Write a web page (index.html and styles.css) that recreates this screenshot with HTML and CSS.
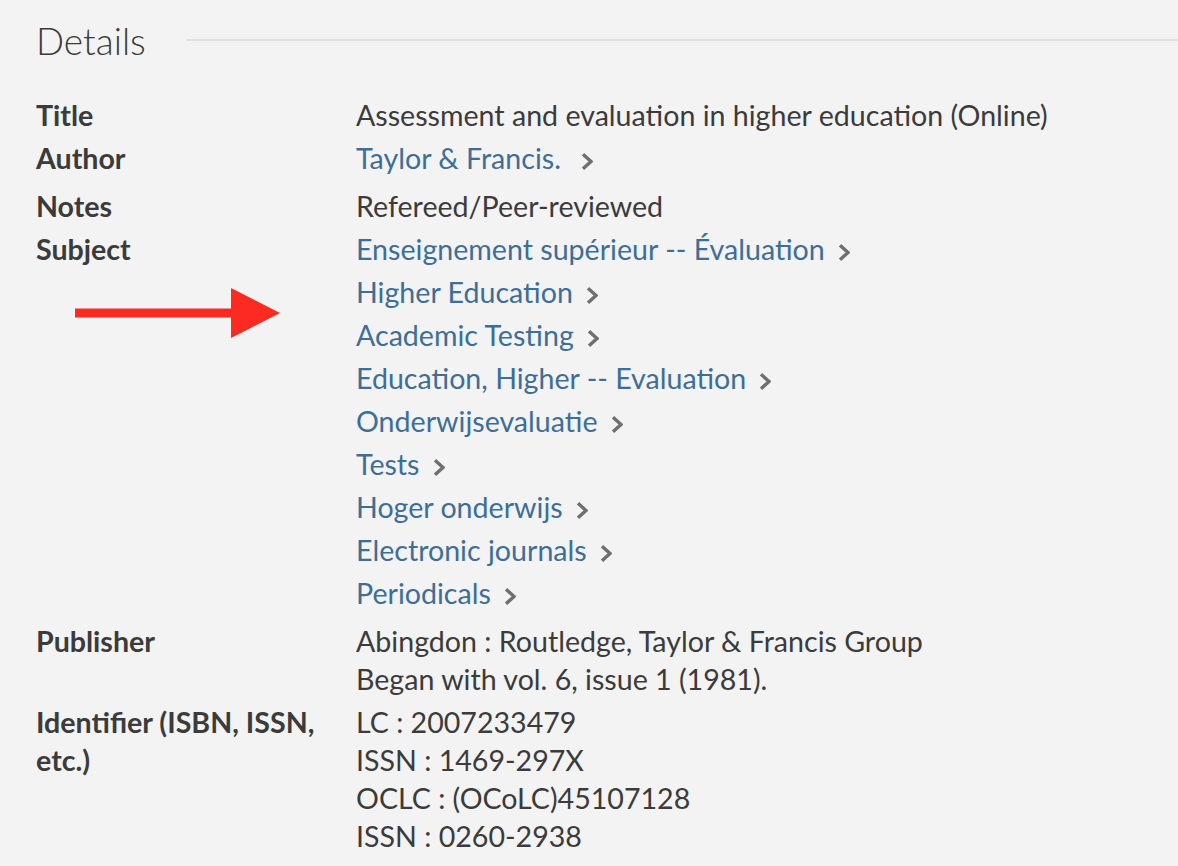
FILE: index.html
```html
<!DOCTYPE html>
<html lang="en">
<head>
<meta charset="utf-8">
<title>Details</title>
<link rel="stylesheet" href="styles.css">
</head>
<body>
<section class="details">
  <header class="details-head">
    <h2 class="details-title">Details</h2>
    <div class="details-rule"></div>
  </header>

  <div class="row">
    <div class="label">Title</div>
    <div class="values"><div class="val">Assessment and evaluation in higher education (Online)</div></div>
  </div>

  <div class="row">
    <div class="label">Author</div>
    <div class="values"><a class="link" href="#">Taylor &amp; Francis.&nbsp;<svg class="chev" viewBox="0 0 12 19" width="12" height="19"><polyline points="2,2.2 10,9.5 2,16.8" /></svg></a></div>
  </div>

  <div class="row">
    <div class="label">Notes</div>
    <div class="values"><div class="val">Refereed/Peer-reviewed</div></div>
  </div>

  <div class="row row-subject">
    <div class="label">Subject</div>
    <div class="values">
      <a class="link" href="#">Enseignement supérieur -- Évaluation<svg class="chev" viewBox="0 0 12 19" width="12" height="19"><polyline points="2,2.2 10,9.5 2,16.8" /></svg></a>
      <a class="link" href="#">Higher Education<svg class="chev" viewBox="0 0 12 19" width="12" height="19"><polyline points="2,2.2 10,9.5 2,16.8" /></svg></a>
      <a class="link" href="#">Academic Testing<svg class="chev" viewBox="0 0 12 19" width="12" height="19"><polyline points="2,2.2 10,9.5 2,16.8" /></svg></a>
      <a class="link" href="#">Education, Higher -- Evaluation<svg class="chev" viewBox="0 0 12 19" width="12" height="19"><polyline points="2,2.2 10,9.5 2,16.8" /></svg></a>
      <a class="link" href="#">Onderwijsevaluatie<svg class="chev" viewBox="0 0 12 19" width="12" height="19"><polyline points="2,2.2 10,9.5 2,16.8" /></svg></a>
      <a class="link" href="#">Tests<svg class="chev" viewBox="0 0 12 19" width="12" height="19"><polyline points="2,2.2 10,9.5 2,16.8" /></svg></a>
      <a class="link" href="#">Hoger onderwijs<svg class="chev" viewBox="0 0 12 19" width="12" height="19"><polyline points="2,2.2 10,9.5 2,16.8" /></svg></a>
      <a class="link" href="#">Electronic journals<svg class="chev" viewBox="0 0 12 19" width="12" height="19"><polyline points="2,2.2 10,9.5 2,16.8" /></svg></a>
      <a class="link" href="#">Periodicals<svg class="chev" viewBox="0 0 12 19" width="12" height="19"><polyline points="2,2.2 10,9.5 2,16.8" /></svg></a>
    </div>
    <svg class="arrow" viewBox="0 0 206 50" width="206" height="50" aria-hidden="true">
      <rect x="0" y="20.5" width="160" height="9" fill="#fc2a20"/>
      <polygon points="156,0 205,25 156,50" fill="#fc2a20"/>
    </svg>
  </div>

  <div class="row">
    <div class="label">Publisher</div>
    <div class="values">
      <div class="val">Abingdon : Routledge, Taylor &amp; Francis Group</div>
      <div class="val">Began with vol. 6, issue 1 (1981).</div>
    </div>
  </div>

  <div class="row">
    <div class="label">Identifier (ISBN, ISSN, etc.)</div>
    <div class="values">
      <div class="val">LC : 2007233479</div>
      <div class="val">ISSN : 1469-297X</div>
      <div class="val">OCLC : (OCoLC)45107128</div>
      <div class="val">ISSN : 0260-2938</div>
    </div>
  </div>
</section>
</body>
</html>
```

FILE: styles.css
```css
html, body {
  margin: 0;
  padding: 0;
  background: #f3f3f3;
}

body {
  font-family: Lato, "Noto Sans", "Liberation Sans", sans-serif;
  color: #3b3b3b;
  font-size: 28.6px;
  line-height: 38px;
}

.details {
  padding: 16px 0 0 36px;
}

.details-head {
  display: flex;
  align-items: center;
  height: 50px;
  margin-bottom: 30px;
}

.details-title {
  margin: 0;
  font-weight: 300;
  font-size: 37px;
  line-height: 50px;
  color: #3b3b3b;
}

.details-rule {
  flex: 1;
  height: 2px;
  background: #dedede;
  margin-left: 41px;
  align-self: center;
  transform: translateY(-1px);
}

.row {
  display: grid;
  grid-template-columns: 320px 1fr;
  margin-bottom: 5px;
}

.row-subject {
  position: relative;
}

.label {
  font-weight: 700;
  padding-right: 2px;
}

.values {
  display: flex;
  flex-direction: column;
  align-items: flex-start;
}

.link {
  color: #3d6e98;
  text-decoration: none;
  padding-bottom: 5px;
  white-space: nowrap;
}

.chev {
  display: inline-block;
  vertical-align: -2px;
  margin-left: 13px;
  fill: none;
  stroke: #6f6f6f;
  stroke-width: 3.4;
}

.arrow {
  position: absolute;
  left: 39px;
  top: 58px;
}
```
